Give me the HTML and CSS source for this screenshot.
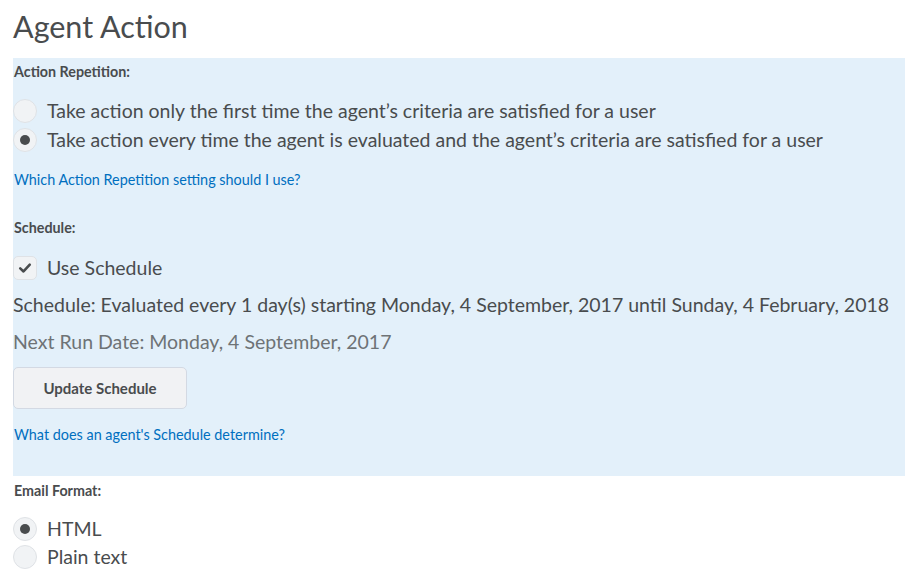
FILE: index.html
```html
<!DOCTYPE html>
<html>
<head>
<meta charset="utf-8">
<link rel="stylesheet" href="styles.css">
</head>
<body>
<div class="page">
  <h1 class="title">Agent Action</h1>
  <div class="panel">
    <div class="label">Action Repetition:</div>
    <div class="choices">
      <label class="choice"><span class="radio"></span><span>Take action only the first time the agent’s criteria are satisfied for a user</span></label>
      <label class="choice"><span class="radio on"></span><span>Take action every time the agent is evaluated and the agent’s criteria are satisfied for a user</span></label>
    </div>
    <a class="help" href="#">Which Action Repetition setting should I use?</a>
    <div class="label label-sched">Schedule:</div>
    <label class="choice check-row"><span class="check"><svg viewBox="0 0 24 24" width="24" height="24"><path d="M6.8 12.4 L10.4 15.8 L17.2 8.4" fill="none" stroke="#494c4e" stroke-width="2.8" stroke-linecap="round" stroke-linejoin="round"/></svg></span><span>Use Schedule</span></label>
    <p class="line">Schedule: Evaluated every 1 day(s) starting Monday, 4 September, 2017 until Sunday, 4 February, 2018</p>
    <p class="line muted">Next Run Date: Monday, 4 September, 2017</p>
    <button class="btn">Update Schedule</button>
    <a class="help help-sched" href="#">What does an agent's Schedule determine?</a>
  </div>
  <div class="label label-email">Email Format:</div>
  <div class="choices email">
    <label class="choice"><span class="radio on"></span><span>HTML</span></label>
    <label class="choice"><span class="radio"></span><span>Plain text</span></label>
  </div>
</div>
</body>
</html>
```
FILE: styles.css
```css
html, body { margin: 0; padding: 0; background: #fff; }
body { font-family: Lato, "Open Sans", sans-serif; color: #494c4e; }
.page { margin-left: 13px; }
.title { font-size: 30.5px; font-weight: 400; margin: 0; padding-top: 8px; line-height: 36px; height: 50px; color: #494c4e; }
.panel { background: #e3f0fa; padding: 5px 0 32px 1px; display: flex; flex-direction: column; align-items: flex-start; }
.label { font-size: 14.3px; font-weight: 700; line-height: 18px; color: #494c4e; }
.choices { display: flex; flex-direction: column; gap: 5px; margin-top: 18px; margin-left: -1px; }
.choice { display: flex; align-items: center; gap: 10px; font-size: 19.5px; line-height: 24px; }
.radio { width: 22px; height: 22px; border-radius: 50%; border: 1px solid #dfe2e6; background: #f1f3f5; display: flex; align-items: center; justify-content: center; flex: none; }
.radio.on::after { content: ""; width: 10px; height: 10px; border-radius: 50%; background: #494c4e; }
.help { font-size: 14.4px; color: #006fbf; text-decoration: none; line-height: 18px; margin-top: 19px; }
.label-sched { margin-top: 30px; }
.check-row { margin-top: 19px; margin-left: -1px; }
.check { width: 22px; height: 22px; border-radius: 5px; border: 1px solid #dfe2e6; background: #f1f3f5; flex: none; display: flex; align-items: center; justify-content: center; }
.check svg { width: 22px; height: 22px; }
.line { margin: 12px 0 0 -1px; font-size: 19.5px; line-height: 26px; }
.muted { color: #6e7376; margin-top: 11px; }
.btn { margin: 12px 0 0 -1px; width: 174px; height: 42px; border: 1px solid #d3d9e3; border-radius: 5px; background: #f1f2f4; font-family: Lato, sans-serif; font-weight: 700; font-size: 15px; color: #494c4e; padding: 0; }
.help-sched { margin-top: 17px; }
.label-email { margin-top: 6px; margin-left: 1px; }
.email { margin-top: 17px; margin-left: 0; gap: 4px; }
```
